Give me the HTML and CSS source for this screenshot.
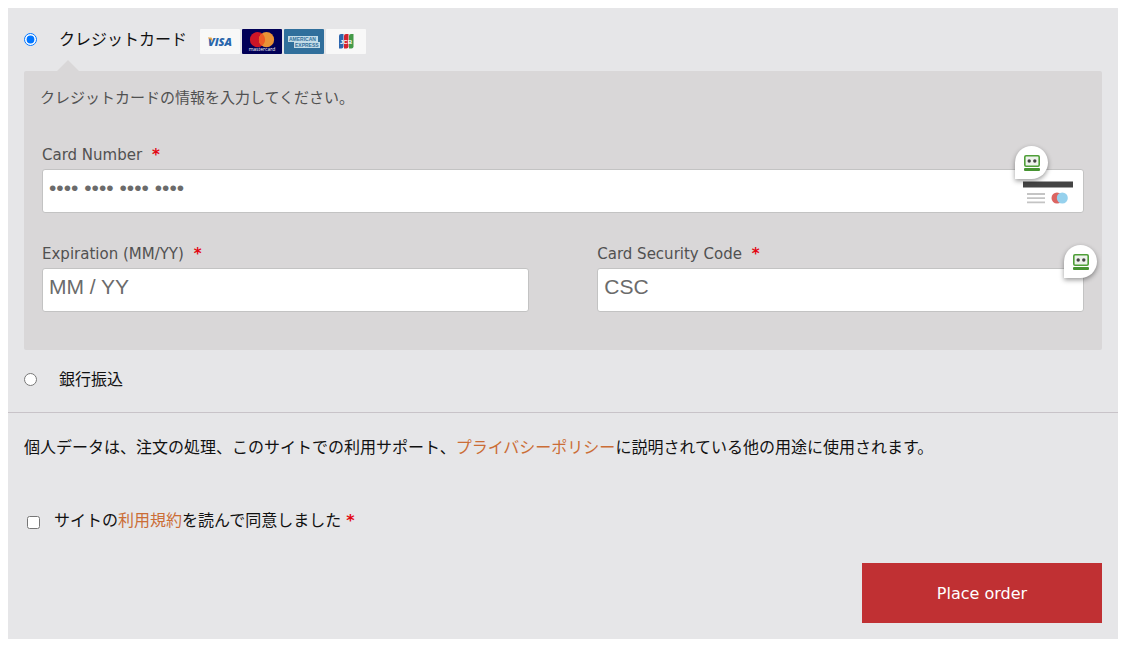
FILE: index.html
```html
<!DOCTYPE html>
<html lang="ja">
<head>
    <meta charset="UTF-8">
    <meta name="viewport" content="width=device-width, initial-scale=1.0">
    <title>お支払い</title>
    <link rel="stylesheet" href="styles.css">
</head>
<body>
    <form class="payment">
        <div class="payment-methods">
            <div class="method">
                <input type="radio" id="method-card" name="payment_method" checked>
                <label for="method-card">クレジットカード</label>
                <div class="card-icons">
                    <svg width="40" height="25" viewBox="0 0 40 25">
                        <rect width="40" height="25" rx="1" fill="#f8f8f8"/>
                        <text x="20" y="17" class="visa">VISA</text>
                        <path d="M8 8.500h3.500l1.500 4.500q-2-3-5-4z" fill="#e8a33a"/>
                    </svg>
                    <svg width="40" height="25" viewBox="0 0 40 25">
                        <rect width="40" height="25" rx="1" fill="#010057"/>
                        <circle cx="15.500" cy="10.700" r="7.600" fill="#cc1527"/>
                        <circle cx="24.500" cy="10.700" r="7.600" fill="#e99336"/>
                        <path d="M20 4.600a7.600 7.600 0 0 1 0 12.200a7.600 7.600 0 0 1 0-12.200z" fill="#ee5a24"/>
                        <text x="20" y="22" class="mastercard">mastercard</text>
                    </svg>
                    <svg width="40" height="25" viewBox="0 0 40 25">
                        <rect width="40" height="25" rx="1" fill="#306f9c"/>
                        <rect x="4" y="7" width="30" height="6" fill="#c4dce8"/>
                        <text x="5" y="12" class="amex">AMERICAN</text>
                        <rect x="10" y="13" width="26" height="6" fill="#c4dce8"/>
                        <text x="11" y="18" class="amex">EXPRESS</text>
                    </svg>
                    <svg width="40" height="25" viewBox="0 0 40 25">
                        <rect width="40" height="25" rx="1" fill="#f8f8f8"/>
                        <path d="M15 5h2.500v12.500a2 2 0 0 1-2 2h-2.500v-12.500a2 2 0 0 1 2-2z" fill="#2d66ad"/>
                        <path d="M20 5h2.500v12.500a2 2 0 0 1-2 2h-2.500v-12.500a2 2 0 0 1 2-2z" fill="#d2232f"/>
                        <path d="M25 5h2.500v12.500a2 2 0 0 1-2 2h-2.500v-12.500a2 2 0 0 1 2-2z" fill="#449a48"/>
                        <text x="20" y="15" class="jcb">JCB</text>
                    </svg>
                </div>
            </div>

            <div class="payment-box">
                <p>クレジットカードの情報を入力してください。</p>
                <div class="fields">
                    <div class="field field-wide">
                        <label for="card-number">Card Number <span class="required">*</span></label>
                        <div class="input-wrap">
                            <input type="text" id="card-number" placeholder="•••• •••• •••• ••••">
                            <svg class="card-back" width="50" height="24" viewBox="0 0 50 24">
                                <path d="M0 .5h50v6H0z" fill="#444"/>
                                <path d="M4 13h18M4 17.200h18M4 21.400h18" stroke="#c4c4c4" stroke-width="1.800"/>
                                <circle cx="34" cy="17" r="5.500" fill="#dc6562"/>
                                <circle cx="39.300" cy="17" r="5.500" fill="#96d1ed"/>
                            </svg>
                            <span class="autofill autofill-inside"><svg width="16" height="16" viewBox="0 0 16 16"><use href="#robot"/></svg></span>
                        </div>
                    </div>
                    <div class="field">
                        <label for="card-expiry">Expiration (MM/YY) <span class="required">*</span></label>
                        <div class="input-wrap">
                            <input type="text" id="card-expiry" placeholder="MM / YY">
                        </div>
                    </div>
                    <div class="field">
                        <label for="card-csc">Card Security Code <span class="required">*</span></label>
                        <div class="input-wrap">
                            <input type="text" id="card-csc" placeholder="CSC">
                            <span class="autofill"><svg width="16" height="16" viewBox="0 0 16 16">
                                <g id="robot">
                                    <rect x=".8" y=".8" width="14.400" height="10.400" rx="1.200" fill="#eef3ec" stroke="#4f9f38" stroke-width="1.600"/>
                                    <circle cx="5.200" cy="6" r="1.700" fill="#444"/>
                                    <circle cx="10.800" cy="6" r="1.700" fill="#444"/>
                                    <rect y="13" width="16" height="3" rx="1" fill="#469331"/>
                                </g>
                            </svg></span>
                        </div>
                    </div>
                </div>
            </div>

            <div class="method">
                <input type="radio" id="method-bank" name="payment_method">
                <label for="method-bank">銀行振込</label>
            </div>
        </div>

        <div class="place-order">
            <p class="privacy">個人データは、注文の処理、このサイトでの利用サポート、<a href="#">プライバシーポリシー</a>に説明されている他の用途に使用されます。</p>
            <div class="terms">
                <input type="checkbox" id="terms">
                <label for="terms">サイトの<a href="#">利用規約</a>を読んで同意しました <span class="required">*</span></label>
            </div>
            <button type="submit">Place order</button>
        </div>
    </form>
</body>
</html>
```

FILE: styles.css
```css
body {
    margin: 8px 7px 0 8px;
    font-family: "DejaVu Sans", "Noto Sans CJK JP", sans-serif;
    font-size: 16px;
    line-height: 24px;
    color: #111;
    background: #fff;
}

.payment {
    background: #e6e6e8;
}

.payment-methods {
    padding: 16px;
    border-bottom: 1px solid #c8c3c8;
}

/* Способ оплаты */
.method {
    display: flex;
    align-items: center;
    height: 32px;
}

.method input {
    width: 13px;
    height: 13px;
    margin: 0 22px 2px 0;
}

.card-icons {
    display: flex;
    gap: 2px;
    margin: 2px 0 0 13px;
}

.visa {
    font: italic 800 11px "Open Sans", sans-serif;
    fill: #2966ac;
    text-anchor: middle;
}

.mastercard {
    font: 5px "Open Sans", sans-serif;
    fill: #fff;
    text-anchor: middle;
}

.amex {
    font: bold 5px "Liberation Sans", sans-serif;
    fill: #306f9c;
}

.jcb {
    font: bold 6px "Liberation Sans", sans-serif;
    fill: #fff;
    text-anchor: middle;
}

/* Блок с данными карты */
.payment-box {
    position: relative;
    margin: 15px 0 14px;
    padding: 15px 16px 38px;
    background: #d9d7d8;
    border-radius: 2px;
    color: #515151;
}

.payment-box::before {
    content: "";
    position: absolute;
    top: -11px;
    left: 32px;
    border: 12px solid transparent;
    border-top: 0;
    border-bottom-color: #d9d7d8;
}

.payment-box p {
    margin: 0 0 32px;
    font-size: 15px;
}

.fields {
    display: flex;
    flex-wrap: wrap;
    justify-content: space-between;
    gap: 28px 0;
    padding: 0 2px;
}

.field {
    width: calc(47% - 3px);
}

.field-wide {
    width: 100%;
}

.field label {
    display: block;
    font-size: 15px;
    line-height: 27px;
}

.field .required {
    margin-left: 5px;
}

.required {
    color: #e30613;
    font-weight: bold;
}

.input-wrap {
    position: relative;
}

.input-wrap input {
    display: block;
    box-sizing: border-box;
    width: 100%;
    height: 44px;
    padding: 4px 6px 10px;
    border: 1px solid #c3c3c3;
    border-radius: 3px;
    background: #fff;
    font-family: "Liberation Sans", Arial, sans-serif;
    font-size: 21px;
}

.input-wrap input::placeholder {
    color: #6b6b6b;
    opacity: 1;
}

.card-back {
    position: absolute;
    top: 12px;
    right: 11px;
}

.autofill {
    position: absolute;
    top: -23px;
    right: -13px;
    display: flex;
    align-items: center;
    justify-content: center;
    width: 33px;
    height: 33px;
    border-radius: 50% 50% 50% 0;
    background: #fff;
    box-shadow: 0 2px 5px rgba(0, 0, 0, 0.4);
}

.autofill-inside {
    right: 36px;
}

/* Подтверждение заказа */
.place-order {
    display: flex;
    flex-direction: column;
    padding: 23px 16px 16px;
}

.place-order a {
    color: #cb6d36;
    text-decoration: none;
}

.privacy {
    margin: 0 0 49px;
}

.terms {
    display: flex;
    align-items: center;
    margin-bottom: 30px;
}

.terms input {
    width: 13px;
    height: 13px;
    margin: 2px 14px 0 3px;
}

.place-order button {
    align-self: flex-end;
    width: 240px;
    height: 60px;
    border: 0;
    background: #c03033;
    color: #fff;
    font-family: inherit;
    font-size: 16px;
    cursor: pointer;
}
```
